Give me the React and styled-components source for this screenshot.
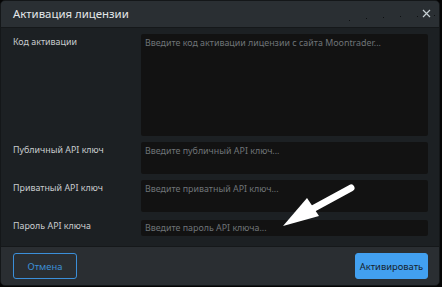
import React from "react";
import styled, { createGlobalStyle } from "styled-components";

const Global = createGlobalStyle`
  html, body { margin: 0; padding: 0; background: #050505; }
  body { font-family: "Noto Sans", "Open Sans", sans-serif; }
  * { box-sizing: border-box; }
`;

const Dialog = styled.div`
  position: relative;
  width: 440px;
  height: 286px;
  background: #1c2023;
  border: 1px solid #141719;
  border-radius: 5px;
  overflow: hidden;
  display: flex;
  flex-direction: column;
`;

const Header = styled.div`
  position: relative;
  height: 27px;
  flex: none;
  background: #2a2f33;
  border-bottom: 1px solid #15181a;
  display: flex;
  align-items: center;
  justify-content: space-between;
  padding: 0 7px 0 12px;
`;

const Title = styled.div`
  color: #e4e7e9;
  font-size: 11.4px;
  line-height: 14px;
  padding-bottom: 1px;
`;

const Close = styled.button`
  width: 12px;
  height: 12px;
  padding: 0;
  border: 0;
  background: transparent;
  display: flex;
  align-items: center;
  justify-content: center;
  margin-bottom: 1px;
`;

const Dots = styled.svg`
  position: absolute;
  left: 0;
  top: 0;
  pointer-events: none;
`;

const Body = styled.div`
  flex: 1;
  padding: 6px 11px 10px 12px;
  display: flex;
  flex-direction: column;
`;

const Row = styled.div`
  display: grid;
  grid-template-columns: 128px 1fr;
  margin-top: ${(p) => p.$gap || 0}px;
`;

const Label = styled.div`
  color: #c9cccf;
  font-size: 8.9px;
  line-height: 12px;
  padding-top: ${(p) => p.$pt ?? 2}px;
`;

const Field = styled.div`
  height: ${(p) => p.$h}px;
  background: #121212;
  border-radius: 2px;
  padding: ${(p) => p.$pt ?? 3}px 4px 0;
  color: #6f7478;
  font-size: 8.9px;
  line-height: 12px;
  white-space: nowrap;
  overflow: hidden;
`;

const Footer = styled.div`
  flex: none;
  height: 39px;
  border-top: 1px solid #15181a;
  background: #2a2e32;
  display: flex;
  align-items: flex-start;
  justify-content: space-between;
  padding: 6px 11px 0 12px;
`;

const Button = styled.button`
  height: 26px;
  width: ${(p) => p.$w}px;
  border-radius: 3px;
  font-family: inherit;
  font-size: 9.4px;
  padding: 0;
  border: 1px solid ${(p) => (p.$primary ? "#42a0f0" : "#3b8fda")};
  background: ${(p) => (p.$primary ? "#42a0f0" : "transparent")};
  color: ${(p) => (p.$primary ? "#16222e" : "#3d8fd6")};
`;

const Arrow = styled.svg`
  position: absolute;
  left: 0;
  top: 0;
  pointer-events: none;
`;

export default function App() {
  return (
    <>
      <Global />
      <Dialog>
        <Header>
          <Title>Активация лицензии</Title>
          <Close aria-label="close">
            <svg width="9" height="9" viewBox="0 0 9 9">
              <path d="M1 1 L8 8 M8 1 L1 8" stroke="#c6cfd3" strokeWidth="1.2" />
            </svg>
          </Close>
          <Dots width="440" height="27">
            {[
              [348, 19],
              [365, 17],
              [382, 16],
              [399, 15],
              [416, 15],
              [433, 14],
            ].map(([x, y]) => (
              <rect key={x} x={x} y={y} width="1" height="1" fill="#0e1012" />
            ))}
          </Dots>
        </Header>
        <Body>
          <Row>
            <Label>Код активации</Label>
            <Field $h={102} $pt={3}>Введите код активации лицензии с сайта Moontrader...</Field>
          </Row>
          <Row $gap={6}>
            <Label>Публичный API ключ</Label>
            <Field $h={32}>Введите публичный API ключ...</Field>
          </Row>
          <Row $gap={6}>
            <Label>Приватный API ключ</Label>
            <Field $h={32}>Введите приватный API ключ...</Field>
          </Row>
          <Row $gap={8}>
            <Label $pt={0}>Пароль API ключа</Label>
            <Field $h={16} $pt={2}>Введите пароль API ключа...</Field>
          </Row>
        </Body>
        <Footer>
          <Button $w={64}>Отмена</Button>
          <Button $w={73} $primary>Активировать</Button>
        </Footer>
        <Arrow width="440" height="286">
          <line x1="350" y1="187" x2="304" y2="212" stroke="#ffffff" strokeWidth="7" strokeLinecap="round" />
          <polygon points="282,225 306,197 318,215" fill="#ffffff" />
        </Arrow>
      </Dialog>
    </>
  );
}
